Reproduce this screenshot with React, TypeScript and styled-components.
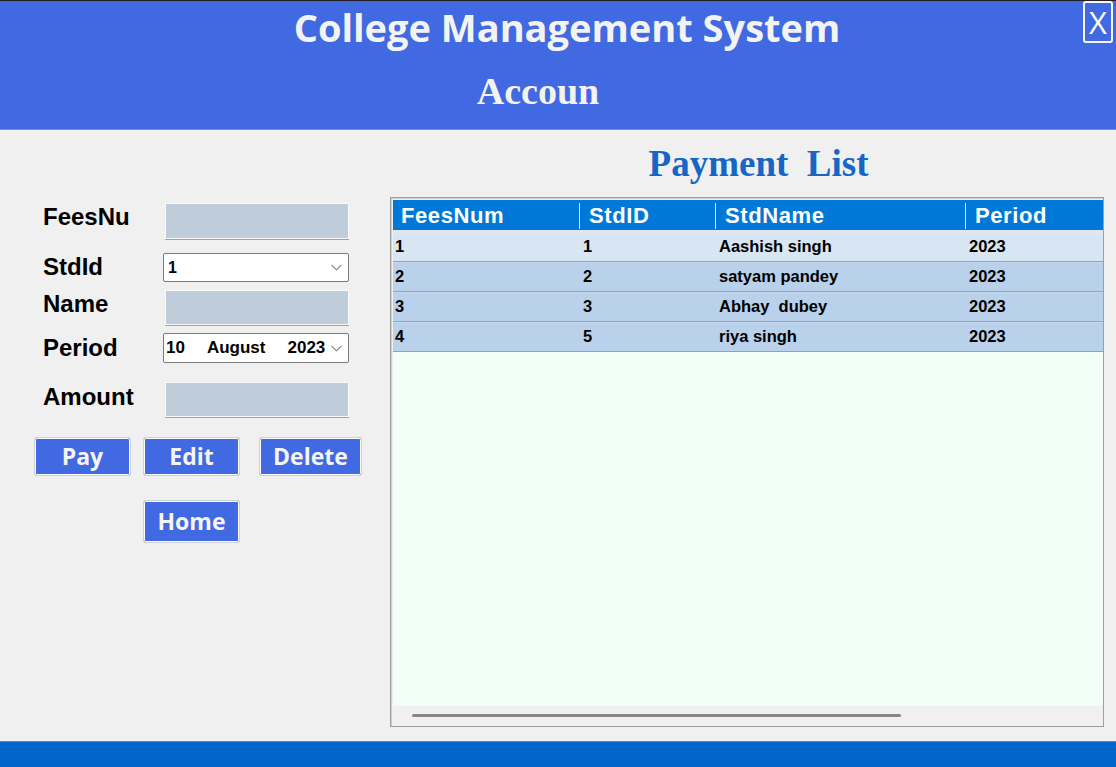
import React from "react";
import styled, { createGlobalStyle } from "styled-components";

const Global = createGlobalStyle`
  html, body { margin: 0; padding: 0; background: #f0f0f0; }
  body { font-family: "Liberation Sans", Arial, sans-serif; }
  * { box-sizing: border-box; }
`;

const Page = styled.div`
  width: 1116px;
  height: 767px;
  display: flex;
  flex-direction: column;
  overflow: hidden;
  background: #f0f0f0;
`;

const Header = styled.header`
  height: 130px;
  flex: none;
  background: #4169e1;
  border-top: 1px solid #202020;
  border-bottom: 1px solid #6f8fe8;
  display: grid;
  grid-template-columns: 1fr 30px;
  padding-right: 3px;
`;

const Titles = styled.div`
  display: flex;
  flex-direction: column;
  align-items: center;
  padding-top: 4px;
`;

const AppTitle = styled.h1`
  margin: 0;
  padding-left: 51px;
  font-family: "Open Sans", sans-serif;
  font-weight: 700;
  font-size: 38px;
  line-height: 44px;
  letter-spacing: 0;
  color: #f3f3f3;
`;

const PageTitle = styled.h2`
  margin: 20px 0 0;
  padding-right: 7px;
  font-family: "Liberation Serif", serif;
  font-weight: 700;
  font-size: 38px;
  line-height: 44px;
  color: #f3f3f3;
`;

const CloseButton = styled.button`
  width: 30px;
  height: 42px;
  padding: 0;
  border: 2px solid #f5f5f5;
  border-radius: 3px;
  background: transparent;
  color: #ffffff;
  font-family: "Open Sans", sans-serif;
  font-size: 31px;
  line-height: 1;
  display: flex;
  align-items: center;
  justify-content: center;
`;

const Main = styled.main`
  flex: 1;
  display: grid;
  grid-template-columns: 390px 714px;
`;

const FormPanel = styled.section`
  display: flex;
  flex-direction: column;
  padding: 73px 0 0 43px;
`;

const Field = styled.div<{ $h: number; $mt: number }>`
  display: grid;
  grid-template-columns: 122px 184px;
  align-items: center;
  height: ${(p) => p.$h}px;
  margin-top: ${(p) => p.$mt}px;
`;

const Label = styled.label<{ $lift?: number }>`
  font-family: "Liberation Sans", Arial, sans-serif;
  font-weight: 700;
  font-size: 24px;
  line-height: 1;
  color: #000;
  margin-bottom: ${(p) => (p.$lift || 0) * 2}px;
`;

const TextBox = styled.div`
  height: 100%;
  background: #bfcdda;
  border: 1px solid #fafafa;
  box-shadow: 0 1px 0 #a0a0a0;
`;

const ComboBox = styled.div<{ $pl: number }>`
  margin-left: -2px;
  width: 186px;
  height: 100%;
  background: #ffffff;
  border: 1px solid #7a7a7a;
  border-radius: 2px;
  display: flex;
  align-items: center;
  padding: 0 6px 0 ${(p) => p.$pl}px;
  font-family: "Liberation Sans", Arial, sans-serif;
  font-weight: 700;
  color: #000;
`;

const ComboValue = styled.span`
  flex: 1;
  font-size: 16px;
`;

const DateParts = styled.span`
  flex: 1;
  display: flex;
  gap: 22px;
  font-size: 17px;
`;

const Chevron = () => (
  <svg width="11" height="7" viewBox="0 0 11 7">
    <polyline points="0.5,0.8 5.5,5.8 10.5,0.8" fill="none" stroke="#7d7d7d" strokeWidth="1.1" />
  </svg>
);

const ButtonRow = styled.div<{ $mt: number; $ml: number }>`
  display: flex;
  margin-top: ${(p) => p.$mt}px;
  margin-left: ${(p) => p.$ml}px;
`;

const ActionButton = styled.button<{ $w: number; $h: number; $ml?: number }>`
  width: ${(p) => p.$w}px;
  height: ${(p) => p.$h}px;
  margin-left: ${(p) => p.$ml || 0}px;
  padding: 0;
  border: 1px solid #d0d0d0;
  border-radius: 3px;
  box-shadow: inset 0 0 0 1px #fdfdfd;
  background: #4169e1;
  color: #f5f5f5;
  font-family: "Open Sans", sans-serif;
  font-weight: 700;
  font-size: 23px;
  line-height: 1;
`;

const ListPanel = styled.section`
  display: flex;
  flex-direction: column;
  padding-top: 12px;
`;

const ListTitle = styled.h2`
  margin: 0;
  padding-left: 23px;
  text-align: center;
  white-space: pre;
  font-family: "Liberation Serif", serif;
  font-weight: 700;
  font-size: 37px;
  line-height: 44px;
  color: #1666c6;
`;

const Grid = styled.div`
  margin-top: 11px;
  height: 530px;
  display: flex;
  flex-direction: column;
  border: 1px solid #9f9f9f;
  box-shadow: inset 1px 1px 0 #cfcfcf;
  padding: 2px 0 0 2px;
  background: #f0f0f0;
`;

const COLS = "186px 136px 250px 138px";

const HeadRow = styled.div`
  display: grid;
  grid-template-columns: ${COLS};
  height: 32px;
  background: #0078d7;
  border-bottom: 2px solid #e2e6ea;
`;

const HeadCell = styled.div<{ $first?: boolean }>`
  position: relative;
  display: flex;
  align-items: center;
  padding: 1px 0 0 ${(p) => (p.$first ? 8 : 10)}px;
  color: #ffffff;
  font-family: "Liberation Sans", Arial, sans-serif;
  font-weight: 700;
  font-size: 22px;
  letter-spacing: 0.6px;
  &::before {
    content: "";
    display: ${(p) => (p.$first ? "none" : "block")};
    position: absolute;
    left: 0;
    top: 3px;
    bottom: 1px;
    width: 1px;
    background: #dbe6f1;
  }
`;

const DataRow = styled.div<{ $light?: boolean }>`
  display: grid;
  grid-template-columns: ${COLS};
  height: 30px;
  background: ${(p) => (p.$light ? "#d8e5f2" : "#b9d1ea")};
  border-bottom: 1px solid #a0a0a0;
  box-shadow: inset 0 1px 0 ${(p) => (p.$light ? "#dfe9f4" : "#c6d9ee")};
`;

const DataCell = styled.div<{ $first?: boolean }>`
  display: flex;
  align-items: center;
  padding-left: ${(p) => (p.$first ? 2 : 4)}px;
  font-family: "Liberation Sans", Arial, sans-serif;
  font-weight: 700;
  font-size: 16.5px;
  color: #000;
  white-space: pre;
`;

const EmptyArea = styled.div`
  flex: 1;
  background: #f1fff7;
`;

const ScrollTrack = styled.div`
  height: 20px;
  flex: none;
  background: #f0f0f0;
  padding: 8px 0 0 19px;
`;

const ScrollThumb = styled.div`
  width: 489px;
  height: 3px;
  border-radius: 2px;
  background: #878787;
`;

const Footer = styled.footer`
  height: 26px;
  flex: none;
  background: #0066cc;
  border-top: 1px solid #4a8fdb;
`;

const rows = [
  { fees: "1", id: "1", name: "Aashish singh", period: "2023" },
  { fees: "2", id: "2", name: "satyam pandey", period: "2023" },
  { fees: "3", id: "3", name: "Abhay  dubey", period: "2023" },
  { fees: "4", id: "5", name: "riya singh", period: "2023" },
];

export default function App() {
  return (
    <Page>
      <Global />
      <Header>
        <Titles>
          <AppTitle>College Management System</AppTitle>
          <PageTitle>Accoun</PageTitle>
        </Titles>
        <CloseButton>X</CloseButton>
      </Header>
      <Main>
        <FormPanel>
          <Field $h={36} $mt={0}>
            <Label $lift={4}>FeesNu</Label>
            <TextBox />
          </Field>
          <Field $h={29} $mt={14}>
            <Label $lift={1}>StdId</Label>
            <ComboBox $pl={4}>
              <ComboValue>1</ComboValue>
              <Chevron />
            </ComboBox>
          </Field>
          <Field $h={35} $mt={8}>
            <Label $lift={4}>Name</Label>
            <TextBox />
          </Field>
          <Field $h={30} $mt={8}>
            <Label>Period</Label>
            <ComboBox $pl={2}>
              <DateParts>
                <span>10</span>
                <span>August</span>
                <span>2023</span>
              </DateParts>
              <Chevron />
            </ComboBox>
          </Field>
          <Field $h={35} $mt={19}>
            <Label $lift={3}>Amount</Label>
            <TextBox />
          </Field>
          <ButtonRow $mt={20} $ml={-9}>
            <ActionButton $w={97} $h={39}>Pay</ActionButton>
            <ActionButton $w={97} $h={39} $ml={12}>Edit</ActionButton>
            <ActionButton $w={103} $h={39} $ml={19}>Delete</ActionButton>
          </ButtonRow>
          <ButtonRow $mt={24} $ml={100}>
            <ActionButton $w={97} $h={43}>Home</ActionButton>
          </ButtonRow>
        </FormPanel>
        <ListPanel>
          <ListTitle>{"Payment  List"}</ListTitle>
          <Grid>
            <HeadRow>
              <HeadCell $first>FeesNum</HeadCell>
              <HeadCell>StdID</HeadCell>
              <HeadCell>StdName</HeadCell>
              <HeadCell>Period</HeadCell>
            </HeadRow>
            {rows.map((r, i) => (
              <DataRow key={r.fees} $light={i === 0}>
                <DataCell $first>{r.fees}</DataCell>
                <DataCell>{r.id}</DataCell>
                <DataCell>{r.name}</DataCell>
                <DataCell>{r.period}</DataCell>
              </DataRow>
            ))}
            <EmptyArea />
            <ScrollTrack>
              <ScrollThumb />
            </ScrollTrack>
          </Grid>
        </ListPanel>
      </Main>
      <Footer />
    </Page>
  );
}
